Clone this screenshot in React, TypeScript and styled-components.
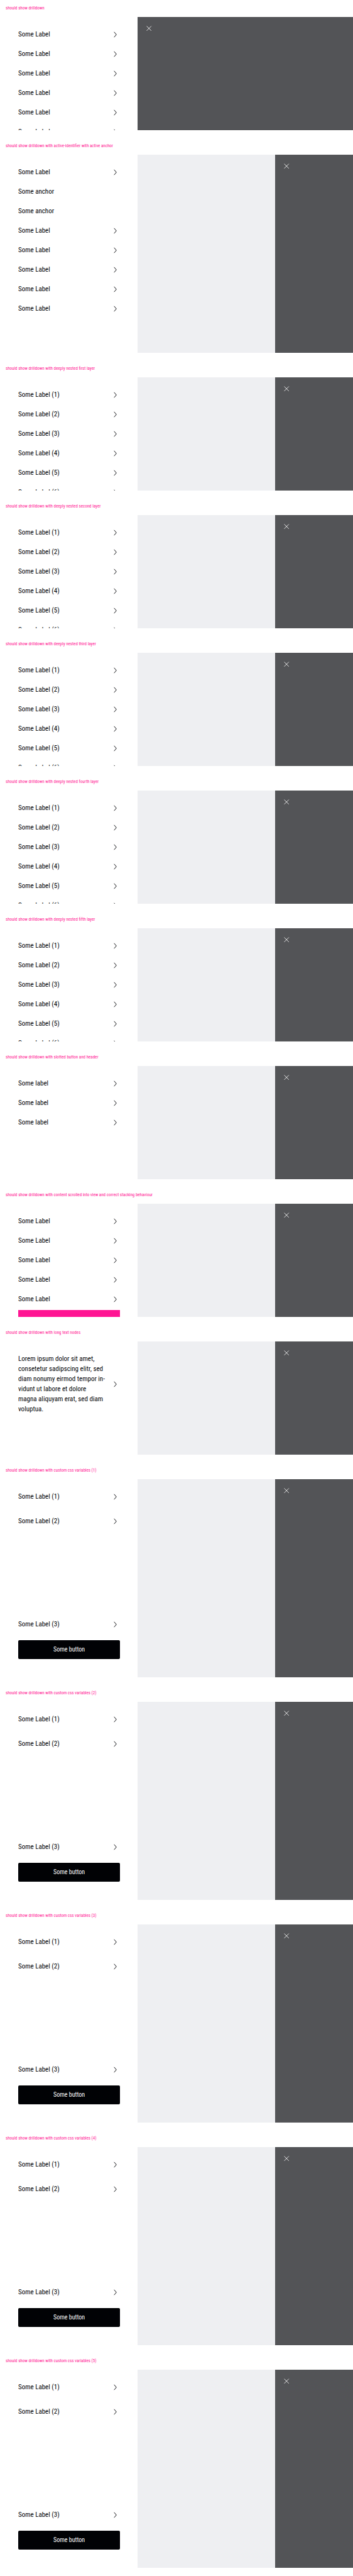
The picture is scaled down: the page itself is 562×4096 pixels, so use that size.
import React from 'react';
import styled, { createGlobalStyle, css } from 'styled-components';

const GlobalStyle = createGlobalStyle`
  *, *::before, *::after { box-sizing: border-box; }
  body {
    margin: 0;
    background: #fff;
    color: #010205;
    font-family: 'Roboto Condensed', Roboto, 'Liberation Sans', sans-serif;
  }
`;

const Page = styled.main`
  width: 100%;
`;

const Section = styled.section`
  padding-bottom: 12px;
`;

const Caption = styled.h2`
  margin: 0;
  padding: 0 9px;
  font-size: 7px;
  font-weight: 400;
  line-height: 27px;
  color: #ff1493;
  white-space: nowrap;
`;

const Stage = styled.div<{ $tall?: boolean; $nested?: boolean }>`
  display: grid;
  grid-template-columns: ${({ $nested }) => ($nested ? '39% 39% 1fr' : '39% 1fr')};
  height: ${({ $tall }) => ($tall ? 315 : 180)}px;
  overflow: hidden;
`;

const Menu = styled.nav<{ $roomy?: boolean }>`
  display: flex;
  flex-direction: column;
  gap: ${({ $roomy }) => ($roomy ? 11 : 3)}px;
  min-height: 0;
  padding: 14px 28px 29px 29px;
  overflow: hidden;
  background: #fff;
`;

const SubMenu = styled.div`
  background: #eeeff2;
`;

const Backdrop = styled.div`
  padding: 11px;
  background: #535457;
`;

const itemStyle = css<{ $last?: boolean }>`
  display: flex;
  flex: none;
  align-items: center;
  gap: 8px;
  width: 100%;
  margin: ${({ $last }) => ($last ? 'auto 0 0' : '0')};
  padding: 6px 0;
  border: 0;
  background: none;
  color: inherit;
  font-family: inherit;
  font-size: 11px;
  line-height: 16px;
  text-align: left;
  text-decoration: none;
  cursor: pointer;
`;

const MenuButton = styled.button<{ $last?: boolean }>`
  ${itemStyle}
`;

const MenuLink = styled.a<{ $last?: boolean }>`
  ${itemStyle}
`;

const ItemText = styled.span`
  flex: 1;
  min-width: 0;
  hyphens: manual;
`;

const Icon = styled.svg`
  display: block;
  flex: none;
  width: 14px;
  height: 14px;
  fill: none;
  stroke: currentColor;
`;

const CloseButton = styled.button`
  display: block;
  padding: 0;
  border: 0;
  background: none;
  color: #fff;
  cursor: pointer;
`;

const PrimaryButton = styled.button`
  flex: none;
  height: 30px;
  padding: 0 14px;
  border: 0;
  border-radius: 2px;
  background: #010205;
  color: #fff;
  font-family: inherit;
  font-size: 10px;
  line-height: 14px;
  cursor: pointer;
`;

const ScrollMarker = styled.div`
  flex: none;
  height: 56px;
  background: #ff1493;
`;

const Chevron = () => (
  <Icon viewBox="0 0 24 24" strokeWidth="1.6" aria-hidden="true">
    <path d="M8 4.8 14.2 12 8 19.2" />
  </Icon>
);

const Cross = () => (
  <Icon viewBox="0 0 24 24" strokeWidth="1.4" aria-hidden="true">
    <path d="M6 6 18.6 18.6M18.6 6 6 18.6" />
  </Icon>
);

type Example = {
  title: string;
  items: string[];
  nested?: boolean;
  tall?: boolean;
  marker?: boolean;
  custom?: boolean;
};

const repeat = (text: string, count: number) => Array<string>(count).fill(text);
const numbered = (count: number) =>
  Array.from({ length: count }, (_, i) => `Some Label (${i + 1})`);

const longText =
  'Lorem ipsum dolor sit amet, consetetur sadipscing elitr, sed diam nonumy eirmod tempor in\u00advidunt ut labore et dolore magna aliquyam erat, sed diam voluptua.';

const examples: Example[] = [
  { title: '', items: repeat('Some Label', 6) },
  {
    title: ' with active-identifier with active anchor',
    items: ['Some Label', 'Some anchor', 'Some anchor', ...repeat('Some Label', 5)],
    nested: true,
    tall: true,
  },
  ...['first', 'second', 'third', 'fourth', 'fifth'].map((layer) => ({
    title: ` with deeply nested ${layer} layer`,
    items: numbered(6),
    nested: true,
  })),
  { title: ' with slotted button and header', items: repeat('Some label', 3), nested: true },
  {
    title: ' with content scrolled into view and correct stacking behaviour',
    items: repeat('Some Label', 5),
    nested: true,
    marker: true,
  },
  { title: ' with long text nodes', items: [longText], nested: true },
  ...[1, 2, 3, 4, 5].map((n) => ({
    title: ` with custom css variables (${n})`,
    items: numbered(3),
    nested: true,
    tall: true,
    custom: true,
  })),
];

const Drilldown = ({ title, items, nested, tall, marker, custom }: Example) => (
  <Section>
    <Caption>should show drilldown{title}</Caption>
    <Stage $tall={tall} $nested={nested}>
      <Menu $roomy={custom} aria-label="Drilldown">
        {items.map((text, i) =>
          text === 'Some anchor' ? (
            <MenuLink key={i} href="#anchor">
              <ItemText>{text}</ItemText>
            </MenuLink>
          ) : (
            <MenuButton key={i} type="button" $last={custom && i === items.length - 1}>
              <ItemText>{text}</ItemText>
              <Chevron />
            </MenuButton>
          ),
        )}
        {marker && <ScrollMarker />}
        {custom && <PrimaryButton type="button">Some button</PrimaryButton>}
      </Menu>
      {nested && <SubMenu />}
      <Backdrop>
        <CloseButton type="button" aria-label="Close">
          <Cross />
        </CloseButton>
      </Backdrop>
    </Stage>
  </Section>
);

export default function App() {
  return (
    <>
      <GlobalStyle />
      <Page>
        {examples.map((example) => (
          <Drilldown key={example.title} {...example} />
        ))}
      </Page>
    </>
  );
}
